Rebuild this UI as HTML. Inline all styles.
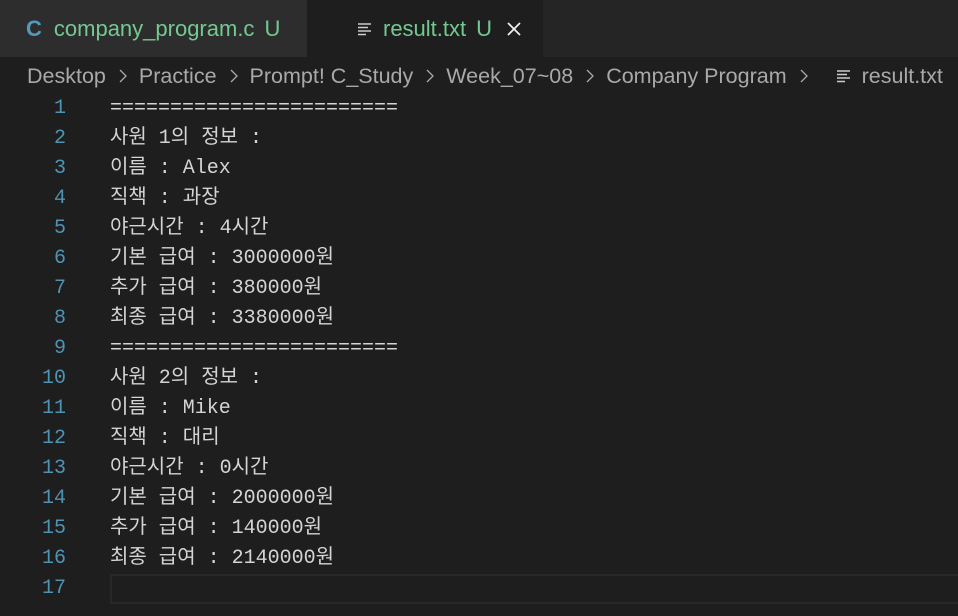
<!DOCTYPE html>
<html><head><meta charset="utf-8"><style>
body{margin:0;width:958px;height:616px;background:#1e1e1e;overflow:hidden;font-family:"Liberation Sans","Noto Sans CJK KR",sans-serif;position:relative}
.tabs{position:absolute;left:0;top:0;width:958px;height:57px;background:#252526}
.tab{position:absolute;top:0;height:57px;display:flex;align-items:center;font-size:22px;color:#73c991}
.t1{left:0;width:307px;background:#2d2d2d}
.t2{left:307px;width:236px;background:#1e1e1e}
.bc{position:absolute;top:57px;left:27px;height:38px;line-height:38px;font-size:21.5px;color:#a9a9a9;white-space:nowrap;display:flex;align-items:center}
.bc .s{margin:0 11px 0 12px;display:block}
.ln{position:absolute;left:0;width:66px;text-align:right;font-family:"Liberation Mono",monospace;font-size:20px;color:#4f93b3}
.tx{position:absolute;left:110px;font-family:"Liberation Mono","Noto Sans CJK KR",monospace;font-size:20px;color:#d4d4d4}
.tx .row{white-space:pre}
.row{height:30px;line-height:30px}
</style></head><body>
<div class="tabs">
<div class="tab t1"><span style="color:#519aba;font-weight:bold;margin-left:26px;margin-right:12px">C</span>company_program.c<span style="margin-left:10px">U</span></div>
<div class="tab t2"><svg width="16" height="16" style="margin-left:50px;margin-right:10px;display:block" viewBox="0 0 16 16"><path d="M1 3h13M1 6.5h10M1 10h13M1 13.5h8" stroke="#ccc" stroke-width="1.5"/></svg>result.txt<span style="margin-left:10px">U</span><svg width="16" height="16" viewBox="0 0 16 16" style="margin-left:14px;display:block"><path d="M2 2L14 14M14 2L2 14" stroke="#eee" stroke-width="1.8"/></svg></div>
</div>
<div class="bc">Desktop<svg class="s" width="10" height="16" viewBox="0 0 10 16"><path d="M2 2l6 6-6 6" fill="none" stroke="#a9a9a9" stroke-width="1.3"/></svg>Practice<svg class="s" width="10" height="16" viewBox="0 0 10 16"><path d="M2 2l6 6-6 6" fill="none" stroke="#a9a9a9" stroke-width="1.3"/></svg>Prompt! C_Study<svg class="s" width="10" height="16" viewBox="0 0 10 16"><path d="M2 2l6 6-6 6" fill="none" stroke="#a9a9a9" stroke-width="1.3"/></svg>Week_07~08<svg class="s" width="10" height="16" viewBox="0 0 10 16"><path d="M2 2l6 6-6 6" fill="none" stroke="#a9a9a9" stroke-width="1.3"/></svg>Company Program<svg class="s" width="10" height="16" viewBox="0 0 10 16"><path d="M2 2l6 6-6 6" fill="none" stroke="#a9a9a9" stroke-width="1.3"/></svg><svg width="16" height="16" viewBox="0 0 16 16" style="margin:0 10px 0 16px;display:block"><path d="M1 3h13M1 6.5h10M1 10h13M1 13.5h8" stroke="#ccc" stroke-width="1.5"/></svg>result.txt</div>
<div class="ln" style="top:94px">
<div class="row">1</div><div class="row">2</div><div class="row">3</div><div class="row">4</div><div class="row">5</div><div class="row">6</div><div class="row">7</div><div class="row">8</div><div class="row">9</div><div class="row">10</div><div class="row">11</div><div class="row">12</div><div class="row">13</div><div class="row">14</div><div class="row">15</div><div class="row">16</div><div class="row">17</div>
</div>
<div style="position:absolute;left:110px;top:574px;width:860px;height:26px;border:2px solid #282828"></div>
<div class="tx" style="top:94px">
<div class="row">========================</div>
<div class="row">사원 1의 정보 :</div>
<div class="row">이름 : Alex</div>
<div class="row">직책 : 과장</div>
<div class="row">야근시간 : 4시간</div>
<div class="row">기본 급여 : 3000000원</div>
<div class="row">추가 급여 : 380000원</div>
<div class="row">최종 급여 : 3380000원</div>
<div class="row">========================</div>
<div class="row">사원 2의 정보 :</div>
<div class="row">이름 : Mike</div>
<div class="row">직책 : 대리</div>
<div class="row">야근시간 : 0시간</div>
<div class="row">기본 급여 : 2000000원</div>
<div class="row">추가 급여 : 140000원</div>
<div class="row">최종 급여 : 2140000원</div>
</div>
</body></html>
